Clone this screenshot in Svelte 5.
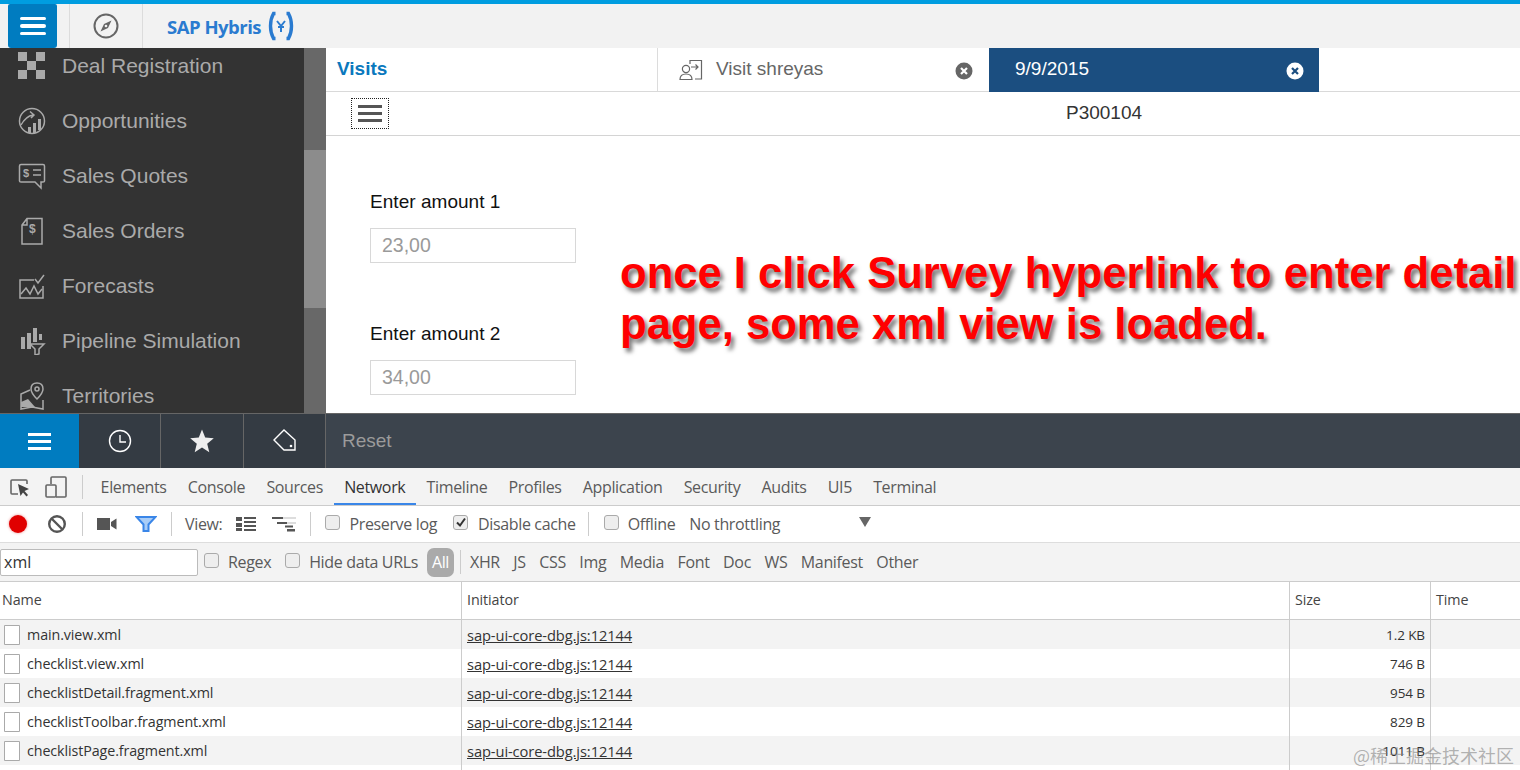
<script>
  const nav = [
    ['Deal Registration', 'deal'],
    ['Opportunities', 'opp'],
    ['Sales Quotes', 'quote'],
    ['Sales Orders', 'order'],
    ['Forecasts', 'fore'],
    ['Pipeline Simulation', 'pipe'],
    ['Territories', 'terr']
  ];
  const tabs = ['Elements','Console','Sources','Network','Timeline','Profiles','Application','Security','Audits','UI5','Terminal'];
  const types = ['XHR','JS','CSS','Img','Media','Font','Doc','WS','Manifest','Other'];
  const rows = [
    ['main.view.xml','1.2 KB'],
    ['checklist.view.xml','746 B'],
    ['checklistDetail.fragment.xml','954 B'],
    ['checklistToolbar.fragment.xml','829 B'],
    ['checklistPage.fragment.xml','1011 B']
  ];
</script>

<div class="page">
  <header class="top">
    <button class="menu-btn" aria-label="menu"><i></i><i></i><i></i></button>
    <div class="compass">
      <svg width="26" height="26" viewBox="0 0 26 26" fill="none"><circle cx="13" cy="13" r="11.5" stroke="#666" stroke-width="2"/><path d="M18.5 7.5 L15 15 L7.5 18.5 L11 11 Z" fill="#666"/><circle cx="13" cy="13" r="1.3" fill="#f2f2f2"/></svg>
    </div>
    <div class="brand">
      <span class="sap">SAP Hybris</span>
      <svg width="26" height="30" viewBox="0 0 26 30" fill="none" stroke="#2a7bd0" stroke-width="3.4"><path d="M7.5 2.5 H5.5 Q2.5 8 2.5 15 Q2.5 22 5.5 27.5 H7.5"/><path d="M18.5 2.5 H20.5 Q23.5 8 23.5 15 Q23.5 22 20.5 27.5 H18.5"/><path d="M9 10 L13 15 L17 10 M13 15 V21 M10 16 H16" stroke-width="2"/></svg>
    </div>
  </header>

  <div class="app">
    <aside class="side">
      <nav class="nav">
        {#each nav as [label, icon]}
          <div class="nav-item">
            <span class="nav-icon">
              <svg width="28" height="28" viewBox="0 0 28 28" fill="none" stroke="#aaa" stroke-width="1.5">
                {#if icon === 'deal'}
                  <g fill="#aaa" stroke="none"><rect x="0" y="0" width="9" height="9"/><rect x="18" y="0" width="9" height="9"/><rect x="9" y="9" width="9" height="9"/><rect x="0" y="18" width="9" height="9"/><rect x="18" y="18" width="9" height="9"/></g>
                {:else if icon === 'opp'}
                  <circle cx="14" cy="14" r="12.5"/>
                  <path d="M3 18 Q8 9 15 8 M12 4.5 L16 8 L13 11 M16 8"/>
                  <g fill="#aaa" stroke="none"><rect x="10" y="20" width="3" height="6"/><rect x="15" y="16" width="3" height="10"/><rect x="20" y="12" width="3" height="11"/></g>
                {:else if icon === 'quote'}
                  <path d="M3 2.5 H25 Q26.5 2.5 26.5 4 V19 Q26.5 20 25 20 H23 V26 L17 20 H3 Q1.5 20 1.5 19 V4 Q1.5 2.5 3 2.5 Z"/>
                  <path d="M15 8 H23 M15 13 H23" stroke-width="1.6"/>
                  <text x="5" y="15" font-size="11" font-weight="700" fill="#aaa" stroke="none" font-family="Liberation Sans">$</text>
                {:else if icon === 'order'}
                  <path d="M9 1.5 H24 V27 H4 V8 Z M9 1.5 V8 H4"/>
                  <text x="11" y="16" font-size="12" font-weight="700" fill="#aaa" stroke="none" font-family="Liberation Sans">$</text>
                {:else if icon === 'fore'}
                  <path d="M16 8 H2 V26 H25 V14"/>
                  <path d="M3 22 L8 16 L12 22 L16 14 L20 22 L24 17"/>
                  <path d="M17 7 L20 11 L26 3"/>
                {:else if icon === 'pipe'}
                  <g fill="#aaa" stroke="none"><rect x="3" y="10" width="4" height="12"/><rect x="9" y="6" width="4" height="16"/><rect x="15" y="1" width="4" height="14"/><rect x="21" y="7" width="3" height="6"/></g>
                  <path d="M12 17 H26 L21 22 V27 L17 28 V22 Z"/>
                {:else}
                  <path d="M12 8 L3 12 V27 L14 25 L25 27 V18"/>
                  <path d="M19 1 Q13 1 13 7 Q13 11 19 17 Q25 11 25 7 Q25 1 19 1 Z"/>
                  <circle cx="19" cy="7" r="2"/>
                  <path d="M3 20 L10 17 L17 25 H3 Z" fill="#aaa" stroke="none"/>
                {/if}
              </svg>
            </span>
            <span>{label}</span>
          </div>
        {/each}
      </nav>
      <div class="side-scroll"><div class="thumb"></div></div>
    </aside>

    <main class="content">
      <div class="tabbar">
        <div class="tab first">Visits</div>
        <div class="tab second">
          <svg width="24" height="22" viewBox="0 0 24 22" fill="none" stroke="#666" stroke-width="1.2"><path d="M11 5 V1.5 H22.5 V20 H16"/><circle cx="7" cy="10" r="3.6"/><path d="M1 20.5 Q1 15 7 15 Q13 15 13 20.5 Z"/><path d="M12 8 H19 M16.5 5.5 L19 8 L16.5 10.5"/></svg>
          <span class="tab-text">Visit shreyas</span>
          <span class="x dark">
            <svg width="18" height="18" viewBox="0 0 18 18"><circle cx="9" cy="9" r="8.5" fill="#666"/><path d="M6 6 L12 12 M12 6 L6 12" stroke="#fff" stroke-width="2.2"/></svg>
          </span>
        </div>
        <div class="tab third">
          <span class="tab-text">9/9/2015</span>
          <span class="x">
            <svg width="18" height="18" viewBox="0 0 18 18"><circle cx="9" cy="9" r="8.5" fill="#fff"/><path d="M6 6 L12 12 M12 6 L6 12" stroke="#1b4e80" stroke-width="2.2"/></svg>
          </span>
        </div>
      </div>
      <div class="subbar">
        <button class="sub-menu" aria-label="menu"><i></i><i></i><i></i></button>
        <div class="pid">P300104</div>
      </div>
      <div class="form">
        <label class="lbl" for="a1">Enter amount 1</label>
        <input id="a1" class="amt" value="23,00" readonly />
        <label class="lbl second-lbl" for="a2">Enter amount 2</label>
        <input id="a2" class="amt" value="34,00" readonly />
      </div>
    </main>
  </div>

  <div class="footer">
    <button class="f-btn active" aria-label="menu"><span class="bars"><i></i><i></i><i></i></span></button>
    <button class="f-btn" aria-label="recent">
      <svg width="24" height="24" viewBox="0 0 24 24" fill="none" stroke="#fff" stroke-width="1.4"><circle cx="12" cy="12" r="10.5"/><path d="M12 6 V13 H18"/></svg>
    </button>
    <button class="f-btn wide" aria-label="favourites">
      <svg width="26" height="26" viewBox="0 0 26 26"><path d="M13 1.5 L16.2 9.6 L24.8 10.2 L18.2 15.7 L20.3 24.2 L13 19.6 L5.7 24.2 L7.8 15.7 L1.2 10.2 L9.8 9.6 Z" fill="#eee"/></svg>
    </button>
    <button class="f-btn" aria-label="tags">
      <svg width="26" height="26" viewBox="0 0 26 26" fill="none" stroke="#fff" stroke-width="1.4"><path d="M2 12 L12 2 L23 12 V22 H12 Z"/><circle cx="19" cy="18" r="1.3" fill="#fff" stroke="none"/></svg>
    </button>
    <div class="reset">Reset</div>
  </div>

  <section class="dev">
    <div class="dev-tabs">
      <svg class="d-ic" width="22" height="22" viewBox="0 0 22 22" fill="none" stroke="#666" stroke-width="1.6"><path d="M9 18 H3 Q2 18 2 17 V5 Q2 4 3 4 H17 Q18 4 18 5 V8"/><path d="M9 8 L20 13 L15.5 15 L19 19 L17.5 20.5 L14 16.5 L11.5 20 Z" fill="#444" stroke="none"/></svg>
      <svg class="d-ic" width="22" height="22" viewBox="0 0 22 22" fill="none" stroke="#666" stroke-width="1.6"><path d="M6 8 V2 Q6 1 7 1 H20 Q21 1 21 2 V20 Q21 21 20 21 H11"/><rect x="1" y="9" width="10" height="12" rx="1"/></svg>
      <span class="d-sep tall"></span>
      {#each tabs as t}
        <span class="d-tab" class:on={t === 'Network'}>{t}</span>
      {/each}
    </div>

    <div class="dev-tools">
      <span class="rec"></span>
      <svg class="block" width="20" height="20" viewBox="0 0 20 20" fill="none" stroke="#555" stroke-width="2.4"><circle cx="10" cy="10" r="7.8"/><path d="M4.5 4.5 L15.5 15.5"/></svg>
      <span class="d-sep s1"></span>
      <svg class="video" width="20" height="14" viewBox="0 0 20 14"><rect x="0" y="1" width="13" height="12" fill="#555"/><path d="M14 5 L19.5 1.5 V12.5 L14 9 Z" fill="#555"/></svg>
      <svg class="funnel" width="22" height="18" viewBox="0 0 22 18"><path d="M1.5 2 H20.5 L13.5 9.5 V16 H8.5 V9.5 Z" fill="#a9cdf7" stroke="#3a86e8" stroke-width="2"/></svg>
      <span class="d-sep s2"></span>
      <span class="t view">View:</span>
      <svg class="list" width="20" height="14" viewBox="0 0 20 14" fill="#555"><rect x="0" y="0" width="6" height="4"/><rect x="8" y="0" width="12" height="2"/><rect x="8" y="4" width="12" height="2"/><rect x="0" y="6" width="6" height="4"/><rect x="8" y="8" width="12" height="2"/><rect x="0" y="11" width="6" height="3"/><rect x="8" y="12" width="12" height="2"/></svg>
      <svg class="water" width="24" height="16" viewBox="0 0 24 16"><rect x="0" y="1" width="11" height="2" fill="#555"/><rect x="11" y="1" width="13" height="2" fill="#ddd"/><rect x="5" y="6" width="10" height="2" fill="#555"/><rect x="15" y="6" width="9" height="2" fill="#ddd"/><rect x="13" y="9.5" width="8" height="2" fill="#555"/><rect x="15" y="13" width="8" height="2.5" fill="#555"/></svg>
      <span class="d-sep s2"></span>
      <span class="cb c1"></span><span class="t lab">Preserve log</span>
      <span class="cb c2 checked"><svg width="12" height="12" viewBox="0 0 12 12" fill="none" stroke="#333" stroke-width="2"><path d="M2 6.5 L5 9.5 L10 2.5"/></svg></span><span class="t lab2">Disable cache</span>
      <span class="d-sep s3"></span>
      <span class="cb c3"></span><span class="t lab">Offline</span>
      <span class="t throttle">No throttling</span>
      <span class="caret"></span>
    </div>

    <div class="dev-filter">
      <input class="search" value="xml" readonly />
      <span class="cb f1"></span><span class="t lab">Regex</span>
      <span class="cb f2"></span><span class="t lab">Hide data URLs</span>
      <span class="all">All</span>
      <span class="d-sep f3"></span>
      {#each types as t}<span class="t type">{t}</span>{/each}
    </div>

    <div class="grid head">
      <div class="c">Name</div>
      <div class="c">Initiator</div>
      <div class="c">Size</div>
      <div class="c">Time</div>
    </div>
    {#each rows as [name, size], i}
      <div class="grid row" class:odd={i % 2 === 0}>
        <div class="c name">
          <svg width="16" height="20" viewBox="0 0 16 20" fill="#fff" stroke="#aaa"><path d="M.5 .5 H15.5 V19.5 H.5 Z"/></svg>
          <span>{name}</span>
        </div>
        <div class="c"><a href="#top" class="link">sap-ui-core-dbg.js:12144</a></div>
        <div class="c right">{size}</div>
        <div class="c"></div>
      </div>
    {/each}
    <div class="grid filler"><div class="c"></div><div class="c"></div><div class="c"></div><div class="c"></div></div>
  </section>

  <div class="note">once I click Survey hyperlink to enter detail<br />page, some xml view is loaded.</div>
  <div class="mark">@稀土掘金技术社区</div>
</div>

<style>
  :global(body) { margin: 0; background: #fff; overflow: hidden; }
  .page { position: relative; width: 1520px; height: 770px; overflow: hidden; font-family: "Liberation Sans", Arial, sans-serif; display: flex; flex-direction: column; }
  button { border: 0; padding: 0; background: none; }

  .top { height: 44px; flex: none; border-top: 4px solid #009de0; background: #f2f2f2; display: flex; align-items: stretch; }
  .menu-btn { width: 49px; height: 44px; margin-left: 8px; background: #007cc0; border-radius: 2px 2px 3px 3px; display: flex; flex-direction: column; align-items: center; justify-content: center; gap: 4px; }
  .menu-btn i { display: block; width: 26px; height: 3.5px; border-radius: 2px; background: #fff; }
  .compass { width: 74px; margin-left: 12px; border-left: 1px solid #dcdcdc; border-right: 1px solid #dcdcdc; display: flex; align-items: center; justify-content: center; box-sizing: border-box; }
  .brand { display: flex; align-items: center; margin-left: 24px; gap: 7px; }
  .sap { font: 700 18.5px "Open Sans", sans-serif; color: #2a7bd0; letter-spacing: -0.5px; }

  .app { height: 365px; flex: none; display: flex; }
  .side { width: 326px; flex: none; background: #333; display: flex; overflow: hidden; }
  .nav { width: 304px; flex: none; margin-top: -10px; }
  .nav-item { height: 55px; display: flex; align-items: center; color: #aaa; font-size: 21px; }
  .nav-icon { width: 62px; padding-left: 18px; box-sizing: border-box; display: flex; align-items: center; flex: none; }
  .side-scroll { width: 22px; background: #686868; padding-top: 102px; box-sizing: border-box; }
  .thumb { height: 158px; background: #8c8c8c; }

  .content { flex: 1; min-width: 0; display: flex; flex-direction: column; background: #fff; }
  .tabbar { height: 44px; box-sizing: border-box; border-bottom: 1px solid #d9d9d9; display: flex; flex: none; }
  .tab { display: flex; align-items: center; box-sizing: border-box; font-size: 19px; }
  .first { width: 332px; padding-left: 11px; padding-bottom: 1px; color: #0a78bd; font-weight: 700; font-size: 19px; border-right: 1px solid #dcdcdc; }
  .second { width: 331px; padding-left: 21px; color: #666; }
  .second .tab-text { margin-left: 13px; position: relative; top: -1px; }
  .third { width: 330px; padding-left: 26px; background: #1b4e80; color: #fff; height: 44px; }
  .third .tab-text { position: relative; top: -1px; }
  .x { margin-left: auto; margin-right: 16px; display: flex; position: relative; top: 1px; }
  .third .x { margin-right: 15px; }
  .subbar { height: 44px; flex: none; box-sizing: border-box; border-bottom: 1px solid #d4d4d4; position: relative; display: flex; align-items: center; justify-content: center; }
  .sub-menu { position: absolute; left: 25px; top: 6px; width: 38px; height: 31px; border: 1px dotted #222; box-sizing: border-box; display: flex; flex-direction: column; align-items: center; justify-content: center; gap: 4px; }
  .sub-menu i { display: block; width: 24px; height: 3px; background: #555; }
  .pid { font-size: 19px; color: #333; margin-left: 362px; position: relative; top: -1px; }
  .form { padding: 54px 0 0 44px; display: flex; flex-direction: column; align-items: flex-start; }
  .lbl { font-size: 19px; line-height: 24px; color: #111; letter-spacing: 0.04px; }
  .second-lbl { margin-top: 59px; }
  .amt { width: 206px; height: 35px; margin-top: 14px; box-sizing: border-box; border: 1px solid #d8d8d8; padding: 0 11px; font: 19.5px "Liberation Sans", sans-serif; color: #9a9a9a; background: #fff; outline: none; }

  .footer { height: 55px; flex: none; background: #3c444d; display: flex; border-top: 1px solid #666; box-sizing: border-box; }
  .f-btn { width: 82px; display: flex; align-items: center; justify-content: center; background: #343b43; border-right: 1px solid #666; box-sizing: border-box; }
  .f-btn.wide { width: 83px; }
  .f-btn.active { width: 79px; background: #007cc0; border-right: 0; }
  .bars { display: flex; flex-direction: column; gap: 4px; }
  .bars i { display: block; width: 23px; height: 3px; background: #fff; }
  .reset { margin-left: 16px; font-size: 19px; color: #9b9b9b; align-self: center; }

  .dev { flex: 1; min-height: 0; background: #fff; font-family: "Open Sans", sans-serif; color: #5a5a5a; display: flex; flex-direction: column; }
  .dev-tabs { height: 38px; flex: none; box-sizing: border-box; background: #f3f3f3; border-bottom: 1px solid #ccc; display: flex; align-items: center; padding-left: 9px; font-size: 16px; }
  .d-ic { margin-right: 14px; flex: none; }
  .d-ic + .d-ic { margin-right: 15px; }
  .d-tab { height: 37px; line-height: 39px; padding: 0 10.6px; box-sizing: border-box; letter-spacing: -0.35px; }
  .d-tab.on { color: #333; border-bottom: 2px solid #3a86e8; }
  .d-sep { width: 1px; height: 24px; background: #ccc; flex: none; }
  .d-sep.tall { margin: 0 7px 0 0; }

  .dev-tools { height: 37px; flex: none; box-sizing: border-box; border-bottom: 1px solid #ddd; display: flex; align-items: center; padding-left: 9px; font-size: 16px; }
  .rec { width: 18px; height: 18px; border-radius: 50%; background: #e00000; box-shadow: 0 0 3px #e88; flex: none; }
  .t { letter-spacing: -0.35px; white-space: nowrap; }
  .block { margin-left: 20px; }
  .s1 { margin-left: 15px; }
  .video { margin-left: 14px; }
  .funnel { margin-left: 18px; }
  .s2 { margin-left: 14px; }
  .view { margin-left: 13px; }
  .list { margin-left: 14px; }
  .water { margin-left: 16px; }
  .cb { width: 13px; height: 13px; border: 1px solid #aaa; background: #eee; border-radius: 3px; display: inline-flex; align-items: center; justify-content: center; flex: none; position: relative; top: -2px; }
  .c1 { margin-left: 14px; }
  .lab { margin-left: 9px; }
  .c2 { margin-left: 16px; }
  .lab2 { margin-left: 10px; }
  .s3 { margin-left: 12px; }
  .c3 { margin-left: 15px; }
  .throttle { margin-left: 14px; }
  .caret { width: 0; height: 0; border-left: 6px solid transparent; border-right: 6px solid transparent; border-top: 10px solid #666; margin-left: 79px; position: relative; top: -2px; }

  .dev-filter { height: 39px; flex: none; box-sizing: border-box; background: #f3f3f3; border-bottom: 1px solid #ccc; display: flex; align-items: center; font-size: 16px; }
  .search { width: 198px; height: 27px; box-sizing: border-box; border: 1px solid #bbb; border-radius: 2px; font: 16px "Open Sans", sans-serif; padding: 0 3px; color: #333; outline: none; }
  .f1 { margin-left: 6px; }
  .f2 { margin-left: 14px; }
  .all { width: 27px; height: 29px; margin-left: 9px; background: #aaa; color: #fff; border-radius: 7px; display: flex; align-items: center; justify-content: center; letter-spacing: -0.4px; }
  .f3 { margin: 0 9px 0 6px; }
  .type { margin-right: 13.5px; }

  .grid { display: grid; grid-template-columns: 461px 828px 141px 90px; }
  .c { border-left: 1px solid #ccc; padding-left: 5px; box-sizing: border-box; font-size: 14.3px; color: #333; display: flex; align-items: center; white-space: nowrap; overflow: hidden; letter-spacing: -0.1px; }
  .c:first-child { border-left: 0; padding-left: 2px; }
  .head { height: 38px; flex: none; border-bottom: 1px solid #ccc; box-sizing: border-box; }
  .head .c { color: #444; padding-bottom: 3px; }
  .row { height: 29px; flex: none; }
  .row.odd { background: #f3f3f3; }
  .filler { flex: 1; }
  .name { gap: 7px; padding-left: 4px !important; }
  .link { color: #333; text-decoration: underline; font-size: 14.7px; }
  .right { justify-content: flex-end; padding-right: 5px; padding-left: 0; font-size: 13.5px; }

  .note { position: absolute; left: 620px; top: 248px; font: 700 43.6px/51px "Liberation Sans", sans-serif; color: #f00; white-space: nowrap; text-shadow: 3px 4px 4px rgba(0,0,0,.55); }
  .mark { position: absolute; right: 6px; top: 742px; font: 18px "Noto Sans CJK SC", sans-serif; color: rgba(120,120,120,.55); }
</style>
